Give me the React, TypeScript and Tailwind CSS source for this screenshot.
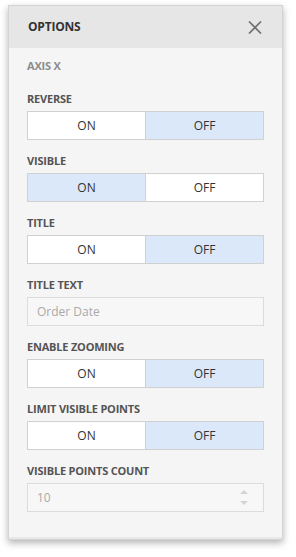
import React from 'react';

const font = { fontFamily: '"Open Sans", "Noto Sans", sans-serif' };

function Toggle({ value }: { value: boolean }) {
  return (
    <div className="flex h-[29px] border border-[#d1d1d1] text-[12px] text-[#333]">
      <div className={`flex-1 flex items-center justify-center border-r border-[#d1d1d1] ${value ? 'bg-[#dae8fa]' : 'bg-white'}`}>ON</div>
      <div className={`flex-1 flex items-center justify-center ${value ? 'bg-white' : 'bg-[#dae8fa]'}`}>OFF</div>
    </div>
  );
}

function Field({ label, children }: { label: string; children: React.ReactNode }) {
  return (
    <div className="mb-[13px]">
      <div className="h-4 leading-4 mb-1 text-[11px] font-bold text-[#545454] tracking-[-0.2px]">{label}</div>
      {children}
    </div>
  );
}

export default function App() {
  return (
    <div className="w-[296px] h-[557px] bg-white pt-[5px] pl-[8px]" style={font}>
      <div className="w-[275px] h-[535px] flex flex-col border border-[#d4d4d4] bg-[#f5f5f5] shadow-[0_3px_7px_rgba(0,0,0,0.3)]">
        {/* Header */}
        <div className="h-[42px] shrink-0 bg-[#e6e6e6] flex items-center justify-between pl-[19px] pr-[20px]">
          <span className="text-[12px] font-bold text-[#333] tracking-[-0.2px]">OPTIONS</span>
          <svg width="14" height="13" viewBox="0 0 14 13">
            <path d="M1 0.5 L13 12.5 M13 0.5 L1 12.5" stroke="#707070" strokeWidth="1.7" fill="none" />
          </svg>
        </div>

        {/* Body */}
        <div className="flex-1 px-[18px] pt-[10px] border-b-2 border-[#e8e8e8]">
          <div className="h-4 leading-4 mb-[17px] text-[11px] font-bold text-[#8c8c8c] tracking-[-0.2px]">AXIS X</div>

          <Field label="REVERSE"><Toggle value={false} /></Field>
          <Field label="VISIBLE"><Toggle value={true} /></Field>
          <Field label="TITLE"><Toggle value={false} /></Field>
          <Field label="TITLE TEXT">
            <div className="h-[29px] border border-[#dcdcdc] bg-[#f7f7f7] flex items-center px-[9px] text-[12px] text-[#a9a9a9]">
              Order Date
            </div>
          </Field>
          <Field label="ENABLE ZOOMING"><Toggle value={false} /></Field>
          <Field label="LIMIT VISIBLE POINTS"><Toggle value={false} /></Field>
          <Field label="VISIBLE POINTS COUNT">
            <div className="h-[29px] border border-[#dcdcdc] bg-[#f7f7f7] flex items-center justify-between pl-[9px] pr-[15px] text-[12px] text-[#a9a9a9]">
              <span>10</span>
              <div className="flex flex-col gap-[7px]">
                <svg width="8" height="4" viewBox="0 0 8 4"><path d="M0 4 L4 0 L8 4 Z" fill="#d4d4d4" /></svg>
                <svg width="8" height="4" viewBox="0 0 8 4"><path d="M0 0 L4 4 L8 0 Z" fill="#d4d4d4" /></svg>
              </div>
            </div>
          </Field>
        </div>
      </div>
    </div>
  );
}
